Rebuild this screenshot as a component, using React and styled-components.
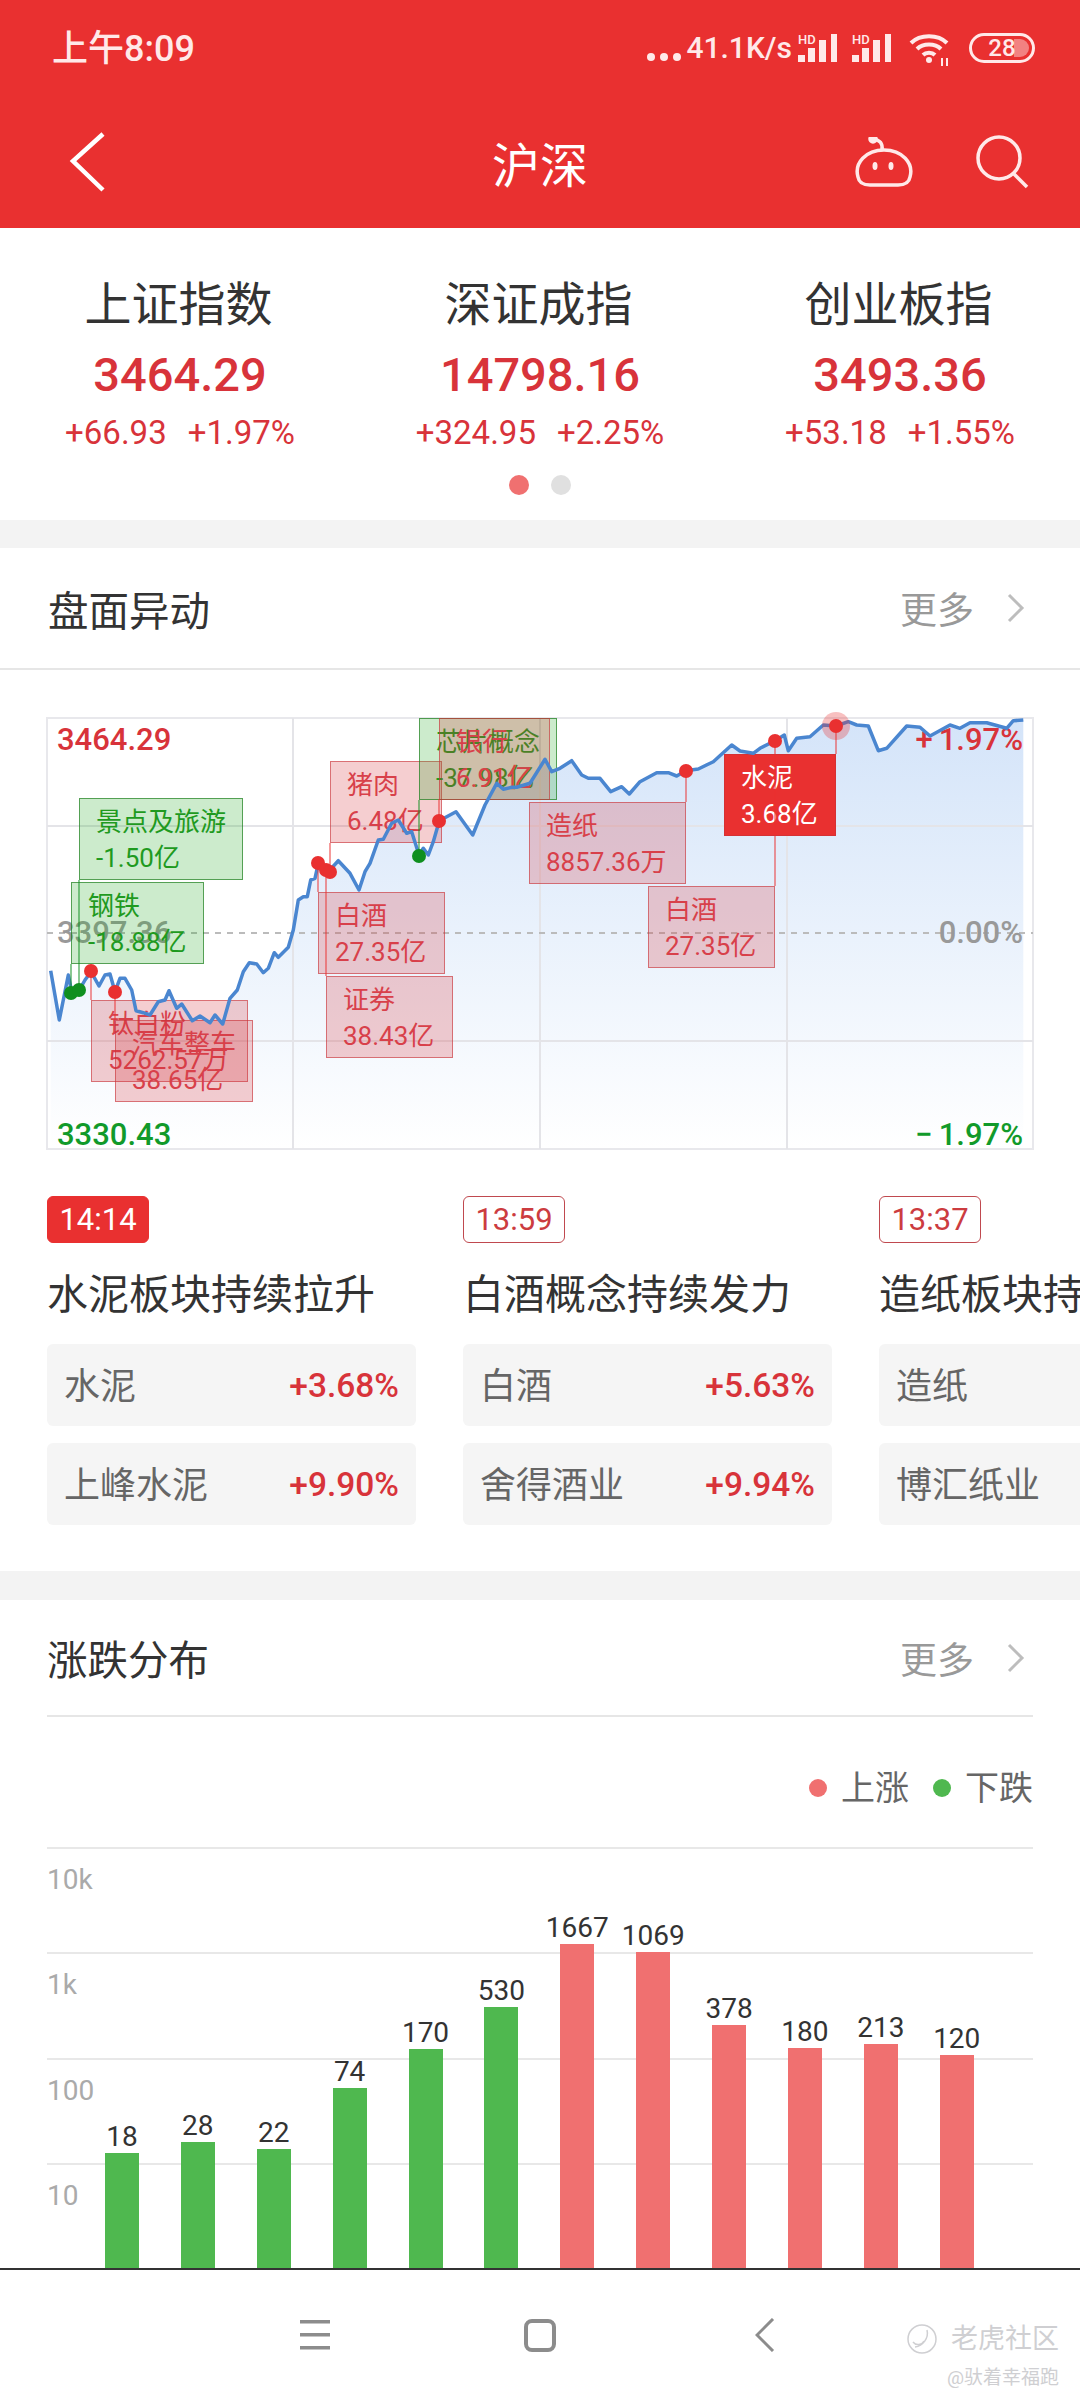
import styled, { createGlobalStyle } from "styled-components";

const RED = "#e93030";
const UP = "#d8333a";
const DOWN = "#119a2a";

const GlobalStyle = createGlobalStyle`
  body {
    margin: 0;
    background: #fff;
    font-family: Roboto, "Noto Sans CJK SC", sans-serif;
  }
`;

const Page = styled.div`
  width: 1080px;
  height: 2400px;
  overflow: hidden;
  display: flex;
  flex-direction: column;
  background: #fff;
`;

/* top red header */
const Header = styled.header`
  height: 228px;
  flex: none;
  background: ${RED};
  color: #ffe9e9;
`;

const StatusBar = styled.div`
  height: 96px;
  box-sizing: border-box;
  padding: 0 45px 0 52px;
  display: flex;
  align-items: center;
  justify-content: space-between;
`;

const Clock = styled.span`
  margin-top: 2px;
  font-size: 36px;
  font-weight: 500;
  line-height: 40px;
`;

const StatusIcons = styled.div`
  display: flex;
  align-items: center;
  height: 30px;
`;

const Dots = styled.span`
  display: flex;
  gap: 5px;
  margin: 18px 5px 0 0;
  i {
    width: 8px;
    height: 8px;
    border-radius: 50%;
    background: #ffe9e9;
  }
`;

const Speed = styled.span`
  font-size: 30px;
  font-weight: 500;
  line-height: 30px;
  margin-right: 6px;
`;

const SignalGap = styled.span`
  width: 14px;
`;

const WifiIcon = styled.svg`
  margin: 4px 0 0 17px;
`;

const Battery = styled.span`
  position: relative;
  box-sizing: border-box;
  width: 66px;
  height: 30px;
  margin-left: 18px;
  border: 3px solid #ffe9e9;
  border-radius: 15px;
  font-size: 24px;
  font-weight: 500;
  line-height: 24px;
  text-align: center;
  &::after {
    content: "";
    position: absolute;
    top: 3px;
    right: 3px;
    width: 15px;
    height: 18px;
    border-radius: 0 9px 9px 0;
    background: rgba(255, 255, 255, 0.4);
  }
`;

const NavBar = styled.div`
  height: 132px;
  display: grid;
  grid-template-columns: 1fr auto 1fr;
  align-items: center;
`;

const Back = styled.div`
  padding-left: 68px;
  display: flex;
`;

const PageTitle = styled.h1`
  margin: 0;
  font-size: 48px;
  font-weight: 400;
  color: #fff;
`;

const NavActions = styled.div`
  display: flex;
  justify-content: flex-end;
  align-items: center;
  gap: 62px;
  padding-right: 50px;
`;

/* three index quotes */
const IndexRow = styled.section`
  height: 292px;
  flex: none;
  box-sizing: border-box;
  padding-top: 47px;
`;

const IndexColumns = styled.div`
  display: grid;
  grid-template-columns: repeat(3, 360px);
`;

const IndexCell = styled.div`
  display: flex;
  flex-direction: column;
  align-items: center;
`;

const IndexName = styled.div`
  margin-left: -3px;
  font-size: 47px;
  line-height: 60px;
  color: #333;
`;

const IndexValue = styled.div`
  margin-top: 10px;
  font-size: 47px;
  font-weight: 500;
  line-height: 60px;
  color: ${UP};
`;

const IndexChange = styled.div`
  margin-top: 8px;
  display: flex;
  gap: 21px;
  font-size: 33px;
  line-height: 40px;
  color: ${UP};
`;

const Pager = styled.div`
  margin-top: 22px;
  display: flex;
  justify-content: center;
  gap: 22px;
`;

const PagerDot = styled.i`
  width: 20px;
  height: 20px;
  border-radius: 50%;
  background: ${(p) => (p.$active ? "#f07070" : "#e0e0e0")};
`;

const Band = styled.div`
  height: ${(p) => p.$h}px;
  flex: none;
  background: #f3f3f3;
`;

const SectionHead = styled.div`
  flex: none;
  display: flex;
  align-items: center;
  justify-content: space-between;
  box-sizing: border-box;
  height: ${(p) => (p.$inset ? 117 : 122)}px;
  margin: ${(p) => (p.$inset ? "0 47px" : "0")};
  padding: ${(p) => (p.$inset ? "0 8px 0 0" : "0 55px 0 48px")};
  border-bottom: 2px solid #e6e6e6;
`;

const SectionTitle = styled.h2`
  margin: 0;
  font-size: 40.5px;
  font-weight: 400;
  color: #333;
`;

const More = styled.div`
  display: flex;
  align-items: center;
  gap: 33px;
  font-size: 37px;
  color: #999;
`;

/* intraday chart */
const Chart = styled.div`
  position: relative;
  flex: none;
  height: 431px;
  margin: 48px 47px 0;
`;

const Layer = styled.svg`
  position: absolute;
  left: 0;
  top: 0;
  overflow: visible;
`;

const ScaleLabel = styled.span`
  position: absolute;
  top: ${(p) => p.$y - 18}px;
  ${(p) => (p.$right ? "right: 10px;" : "left: 10px;")}
  font-size: 31px;
  font-weight: 500;
  line-height: 36px;
  color: ${(p) => p.$color};
`;

const Sign = styled.span`
  margin-right: 6px;
`;

const Callout = styled.div`
  position: absolute;
  left: ${(p) => p.$x}px;
  top: ${(p) => p.$y}px;
  width: ${(p) => p.$w}px;
  height: 82px;
  box-sizing: border-box;
  padding: 5px 0 0 16px;
  white-space: nowrap;
  font-size: 26px;
  line-height: 36px;
  border: 1px solid
    ${(p) =>
      p.$tone === "down" ? "rgba(20, 120, 20, 0.65)" : "rgba(200, 50, 55, 0.6)"};
  background: ${(p) =>
    p.$tone === "down"
      ? "rgba(40, 170, 40, 0.24)"
      : p.$tone === "active"
        ? RED
        : "rgba(215, 50, 60, 0.24)"};
  color: ${(p) =>
    p.$tone === "down" ? "#1f9a1f" : p.$tone === "active" ? "#fff" : "#d8404a"};
`;

/* moves carousel */
const Moves = styled.div`
  flex: none;
  display: flex;
  gap: 47px;
  padding: 47px 0 46px 47px;
  width: 1200px;
`;

const MoveCard = styled.div`
  flex: none;
  width: 369px;
`;

const TimeTag = styled.span`
  display: inline-block;
  box-sizing: border-box;
  width: 102px;
  height: 47px;
  border-radius: 6px;
  border: 1px solid ${(p) => (p.$active ? RED : "#c0494f")};
  background: ${(p) => (p.$active ? RED : "#fff")};
  color: ${(p) => (p.$active ? "#fff" : "#cc3c40")};
  font-size: 31px;
  line-height: 45px;
  text-align: center;
`;

const MoveTitle = styled.div`
  margin-top: 25px;
  font-size: 41px;
  line-height: 54px;
  color: #333;
  white-space: nowrap;
`;

const MoveRow = styled.div`
  height: 82px;
  margin-top: ${(p) => (p.$first ? 22 : 17)}px;
  padding: 0 17px;
  display: flex;
  align-items: center;
  justify-content: space-between;
  border-radius: 6px;
  background: #f5f5f5;
  font-size: 36px;
  color: #666;
  span {
    margin-bottom: 5px;
  }
  b {
    font-size: 33.5px;
    font-weight: 500;
    color: ${UP};
  }
`;

/* advance / decline distribution */
const Legend = styled.div`
  flex: none;
  height: 130px;
  box-sizing: border-box;
  padding: 54px 47px 0 0;
  display: flex;
  justify-content: flex-end;
  align-items: flex-start;
  gap: 24px;
  font-size: 34px;
  line-height: 34px;
  color: #666;
`;

const LegendItem = styled.span`
  display: flex;
  align-items: center;
  gap: 14px;
  &::before {
    content: "";
    width: 18px;
    height: 18px;
    border-radius: 50%;
    background: ${(p) => p.$color};
  }
`;

const Distribution = styled.div`
  position: relative;
  flex: none;
  height: 421px;
  margin: 0 47px;
`;

const GridRow = styled.div`
  box-sizing: border-box;
  height: 105.25px;
  border-top: 2px solid #e8e8e8;
  padding-top: 14px;
  font-size: 28px;
  line-height: 34px;
  color: #aaa;
`;

const Bars = styled.div`
  position: absolute;
  inset: 0;
  padding-left: 37px;
  display: grid;
  grid-template-columns: repeat(12, 75.9px);
  align-items: end;
`;

const BarColumn = styled.div`
  display: flex;
  flex-direction: column;
  align-items: center;
  font-size: 28px;
  line-height: 34px;
  color: #333;
`;

const Bar = styled.div`
  width: 34px;
  margin-top: -1px;
  background: ${(p) => (p.$up ? "#f07070" : "#4fb84f")};
`;

/* system navigation */
const SystemNav = styled.nav`
  position: relative;
  flex: none;
  height: 130px;
  border-top: 2px solid #333;
  background: #fff;
  display: flex;
  align-items: center;
  justify-content: center;
`;

const NavSlot = styled.div`
  width: 225px;
  display: flex;
  justify-content: center;
`;

const Watermark = styled.div`
  position: absolute;
  right: 21px;
  top: 52px;
  display: flex;
  flex-direction: column;
  align-items: flex-end;
  color: #cfcfd2;
`;

const MarkName = styled.div`
  display: flex;
  align-items: center;
  gap: 14px;
  font-size: 27px;
  line-height: 34px;
`;

const MarkUser = styled.div`
  margin-top: 10px;
  font-size: 19px;
  line-height: 24px;
`;

const Signal = () => (
  <svg width="40" height="30" viewBox="0 0 40 30" fill="#ffe9e9" overflow="visible">
    <text x="0" y="11" fontSize="13" fontWeight="500" fontFamily="Roboto">HD</text>
    <rect x="0" y="22" width="7" height="7" />
    <rect x="10" y="15" width="7" height="14" />
    <rect x="21" y="7" width="7" height="22" />
    <rect x="33" y="1" width="6" height="28" />
  </svg>
);

const Wifi = () => (
  <WifiIcon width="42" height="34" viewBox="0 0 42 34" fill="none" stroke="#ffe9e9" strokeWidth="4">
    <path d="M2 10 C11 1 29 1 38 10" />
    <path d="M8 16 C14 10 26 10 32 16" />
    <path d="M14 22 C17 19 23 19 26 22" />
    <circle cx="20" cy="27" r="3" fill="#ffe9e9" stroke="none" />
    <path d="M33 25 V33 M38 25 V33" strokeWidth="2" />
  </WifiIcon>
);

const LEG_A = [[62,812],[88,960],[115,825],[125,875],[148,870],[165,840],[183,815],[207,858],[225,825],[240,822],[255,875],[270,835],[285,835],[305,870],[318,932],[340,938],[360,945],[385,905],[405,900],[417,872],[440,925],[455,912],[487,962],[510,948],[540,968],[555,945],[578,972],[600,895],[622,870],[640,815],[658,788],[680,792],[700,818],[715,805],[733,758],[745,772],[775,742],[790,690],[805,600],[820,590],[832,590],[842,540],[855,535],[865,490],[895,515],[925,482],[960,520],[987,570],[1005,515],[1020,490],[1045,420],[1060,418],[1085,370],[1105,360],[1130,400],[1145,395],[1167,465],[1180,445],[1195,465],[1210,425],[1228,362],[1278,335],[1328,405],[1365,315],[1400,250],[1420,268],[1445,262],[1460,262],[1500,250]];
const LEG_B = [[15,178],[35,215],[60,205],[95,182],[125,225],[145,235],[180,235],[212,275],[245,260],[268,282],[300,245],[350,218],[385,218],[410,228],[437,212],[475,207],[520,185],[575,135],[600,153],[640,160],[660,145],[705,122],[733,105],[745,152],[770,115],[810,110],[850,75],[888,78],[925,65],[950,75],[985,78],[1015,152],[1040,145],[1100,78],[1140,82],[1170,108],[1230,75],[1260,85],[1290,68],[1340,68],[1400,85],[1420,62],[1450,60]];

const PRICE = [...LEG_A, ...LEG_B.map(([u, v]) => [u + 1530, v])].map(([u, v]) => [
  +(u / 3 - 17).toFixed(1),
  +(v / 3 - 18).toFixed(1),
]);
const pricePath = PRICE.map((p) => p.join(",")).join(" ");
const areaPath = `${PRICE[0][0]},431 ${pricePath} ${PRICE[PRICE.length - 1][0]},431`;

// dot x/y on the line and where its leader meets the box
const MARKS = [
  { x: 24, y: 275, to: 246, c: "down" },
  { x: 32, y: 272, to: 162, c: "down" },
  { x: 44, y: 253, to: 282 },
  { x: 68, y: 274, to: 302 },
  { x: 271, y: 145, to: 174 },
  { x: 279, y: 152, to: 258 },
  { x: 283, y: 154, to: 125 },
  { x: 372, y: 138, to: 82, c: "down" },
  { x: 392, y: 103, to: 81 },
  { x: 639, y: 53, to: 84 },
  { x: 728, y: 23, to: 168 },
  { x: 789, y: 8, to: 36, halo: true },
];

const CALLOUTS = [
  { x: 32, y: 80, w: 164, name: "景点及旅游", amount: "-1.50亿", tone: "down" },
  { x: 24, y: 164, w: 133, name: "钢铁", amount: "-18.88亿", tone: "down" },
  { x: 44, y: 282, w: 157, name: "钛白粉", amount: "5262.57万" },
  { x: 68, y: 302, w: 138, name: "汽车整车", amount: "38.65亿" },
  { x: 283, y: 43, w: 112, name: "猪肉", amount: "6.48亿" },
  { x: 271, y: 174, w: 127, name: "白酒", amount: "27.35亿" },
  { x: 279, y: 258, w: 127, name: "证券", amount: "38.43亿" },
  { x: 372, y: 0, w: 138, name: "芯片概念", amount: "-37.98亿", tone: "down" },
  { x: 392, y: 0, w: 111, name: "银行", amount: "6.91亿" },
  { x: 482, y: 84, w: 157, name: "造纸", amount: "8857.36万" },
  { x: 601, y: 168, w: 127, name: "白酒", amount: "27.35亿" },
  { x: 677, y: 36, w: 112, name: "水泥", amount: "3.68亿", tone: "active" },
];

const INDEXES = [
  { name: "上证指数", value: "3464.29", diff: "+66.93", pct: "+1.97%" },
  { name: "深证成指", value: "14798.16", diff: "+324.95", pct: "+2.25%" },
  { name: "创业板指", value: "3493.36", diff: "+53.18", pct: "+1.55%" },
];

const MOVES = [
  { time: "14:14", active: true, title: "水泥板块持续拉升", rows: [["水泥", "+3.68%"], ["上峰水泥", "+9.90%"]] },
  { time: "13:59", title: "白酒概念持续发力", rows: [["白酒", "+5.63%"], ["舍得酒业", "+9.94%"]] },
  { time: "13:37", title: "造纸板块持续拉升", rows: [["造纸", ""], ["博汇纸业", ""]] },
];

// top = y of the bar's top edge inside the 421px plot
const BARS = [
  { n: 18, top: 306 }, { n: 28, top: 295 }, { n: 22, top: 302 },
  { n: 74, top: 241 }, { n: 170, top: 202 }, { n: 530, top: 160 },
  { n: 1667, top: 97, up: true }, { n: 1069, top: 105, up: true }, { n: 378, top: 178, up: true },
  { n: 180, top: 201, up: true }, { n: 213, top: 197, up: true }, { n: 120, top: 208, up: true },
];

const Chevron = () => (
  <svg width="18" height="30" viewBox="0 0 18 30" fill="none" stroke="#bdbdbd" strokeWidth="3">
    <path d="M2 2 L15 15 L2 28" />
  </svg>
);

export default function App() {
  return (
    <Page>
      <GlobalStyle />
      <Header>
        <StatusBar>
          <Clock>上午8:09</Clock>
          <StatusIcons>
            <Dots><i /><i /><i /></Dots>
            <Speed>41.1K/s</Speed>
            <Signal />
            <SignalGap />
            <Signal />
            <Wifi />
            <Battery>28</Battery>
          </StatusIcons>
        </StatusBar>
        <NavBar>
          <Back>
            <svg width="38" height="60" viewBox="0 0 38 60" fill="none" stroke="#fff" strokeWidth="4.5">
              <path d="M35 2 L5 29 L35 58" />
            </svg>
          </Back>
          <PageTitle>沪深</PageTitle>
          <NavActions>
            <svg width="60" height="50" viewBox="0 0 60 50" fill="none" stroke="#ffe9e9" strokeWidth="3.5">
              <path d="M4 40 C0 26 12 13 30 13 C48 13 60 26 56 40 C55 46 50 48 44 48 H16 C10 48 5 46 4 40 Z" />
              <path d="M28 13 C29 6 26 3 19 2" />
              <circle cx="19" cy="2" r="3" fill="#ffe9e9" />
              <ellipse cx="21" cy="29" rx="2.5" ry="4" fill="#ffe9e9" stroke="none" />
              <ellipse cx="37" cy="29" rx="2.5" ry="4" fill="#ffe9e9" stroke="none" />
            </svg>
            <svg width="54" height="54" viewBox="0 0 54 54" fill="none" stroke="#ffe9e9" strokeWidth="3.5">
              <circle cx="23" cy="23" r="21" />
              <path d="M37 38 L51 52" />
            </svg>
          </NavActions>
        </NavBar>
      </Header>

      <IndexRow>
        <IndexColumns>
          {INDEXES.map((item) => (
            <IndexCell key={item.name}>
              <IndexName>{item.name}</IndexName>
              <IndexValue>{item.value}</IndexValue>
              <IndexChange><span>{item.diff}</span><span>{item.pct}</span></IndexChange>
            </IndexCell>
          ))}
        </IndexColumns>
        <Pager><PagerDot $active /><PagerDot /></Pager>
      </IndexRow>
      <Band $h={28} />

      <SectionHead>
        <SectionTitle>盘面异动</SectionTitle>
        <More>更多<Chevron /></More>
      </SectionHead>

      <Chart>
        <Layer width="986" height="431">
          <defs>
            <linearGradient id="areaFill" gradientUnits="userSpaceOnUse" x1="0" y1="0" x2="0" y2="431">
              <stop offset="0" stopColor="#d4e4f9" />
              <stop offset="1" stopColor="#ffffff" />
            </linearGradient>
          </defs>
          <polygon points={areaPath} fill="url(#areaFill)" />
          <rect x="0" y="0" width="986" height="431" fill="none" stroke="#e8e8ec" strokeWidth="2" />
          <g stroke="#e4e4e8" strokeWidth="2">
            <path d="M246 0 V431 M493 0 V431 M740 0 V431 M0 108 H986 M0 323 H986" />
          </g>
          <path d="M0 215 H986" stroke="#bbb" strokeWidth="2" strokeDasharray="6 6" />
        </Layer>

        <ScaleLabel $y={22} $color={UP}>3464.29</ScaleLabel>
        <ScaleLabel $y={215} $color="#999">3397.36</ScaleLabel>
        <ScaleLabel $y={417} $color={DOWN}>3330.43</ScaleLabel>
        <ScaleLabel $y={22} $right $color={UP}><Sign>+</Sign>1.97%</ScaleLabel>
        <ScaleLabel $y={215} $right $color="#999">0.00%</ScaleLabel>
        <ScaleLabel $y={417} $right $color={DOWN}><Sign>−</Sign>1.97%</ScaleLabel>

        {CALLOUTS.map((c) => (
          <Callout key={c.name + c.x} $x={c.x} $y={c.y} $w={c.w} $tone={c.tone}>
            {c.name}<br />{c.amount}
          </Callout>
        ))}

        <Layer width="986" height="431">
          <polyline points={pricePath} fill="none" stroke="#4a86d0" strokeWidth="3.5" strokeLinejoin="round" />
          {MARKS.map((m) => {
            const color = m.c === "down" ? "#0f8f1f" : RED;
            return (
              <g key={m.x}>
                <line x1={m.x} x2={m.x} y1={m.y} y2={m.to} stroke={color} strokeOpacity="0.65" strokeWidth="1.5" />
                {m.halo && <circle cx={m.x} cy={m.y} r="14" fill={RED} fillOpacity="0.3" />}
                <circle cx={m.x} cy={m.y} r="7" fill={color} />
              </g>
            );
          })}
        </Layer>
      </Chart>

      <Moves>
        {MOVES.map((m) => (
          <MoveCard key={m.time}>
            <TimeTag $active={m.active}>{m.time}</TimeTag>
            <MoveTitle>{m.title}</MoveTitle>
            {m.rows.map(([name, pct], i) => (
              <MoveRow key={name} $first={i === 0}>
                <span>{name}</span>
                {pct && <b>{pct}</b>}
              </MoveRow>
            ))}
          </MoveCard>
        ))}
      </Moves>
      <Band $h={29} />

      <SectionHead $inset>
        <SectionTitle>涨跌分布</SectionTitle>
        <More>更多<Chevron /></More>
      </SectionHead>

      <Legend>
        <LegendItem $color="#f07070">上涨</LegendItem>
        <LegendItem $color="#4fb84f">下跌</LegendItem>
      </Legend>

      <Distribution>
        <GridRow>10k</GridRow>
        <GridRow>1k</GridRow>
        <GridRow>100</GridRow>
        <GridRow>10</GridRow>
        <Bars>
          {BARS.map((b) => (
            <BarColumn key={b.n}>
              {b.n}
              <Bar $up={b.up} style={{ height: 421 - b.top }} />
            </BarColumn>
          ))}
        </Bars>
      </Distribution>

      <SystemNav>
        <NavSlot>
          <svg width="30" height="30" viewBox="0 0 30 30" fill="#8c8c8c">
            <rect x="0" y="0" width="30" height="3.5" />
            <rect x="0" y="13" width="30" height="3.5" />
            <rect x="0" y="26" width="30" height="3.5" />
          </svg>
        </NavSlot>
        <NavSlot>
          <svg width="32" height="33" viewBox="0 0 32 33" fill="none" stroke="#8c8c8c" strokeWidth="4">
            <rect x="2" y="2" width="28" height="29" rx="6" />
          </svg>
        </NavSlot>
        <NavSlot>
          <svg width="20" height="34" viewBox="0 0 20 34" fill="none" stroke="#8c8c8c" strokeWidth="3">
            <path d="M18 1 L2 17 L18 33" />
          </svg>
        </NavSlot>
        <Watermark>
          <MarkName>
            <svg width="30" height="30" viewBox="0 0 30 30" fill="none" stroke="#cfcfd2" strokeWidth="1.5">
              <circle cx="15" cy="15" r="14" />
              <path d="M20 6 C22 14 16 22 8 23 M6 18 C9 22 15 21 17 17" />
            </svg>
            老虎社区
          </MarkName>
          <MarkUser>@驮着幸福跑</MarkUser>
        </Watermark>
      </SystemNav>
    </Page>
  );
}
